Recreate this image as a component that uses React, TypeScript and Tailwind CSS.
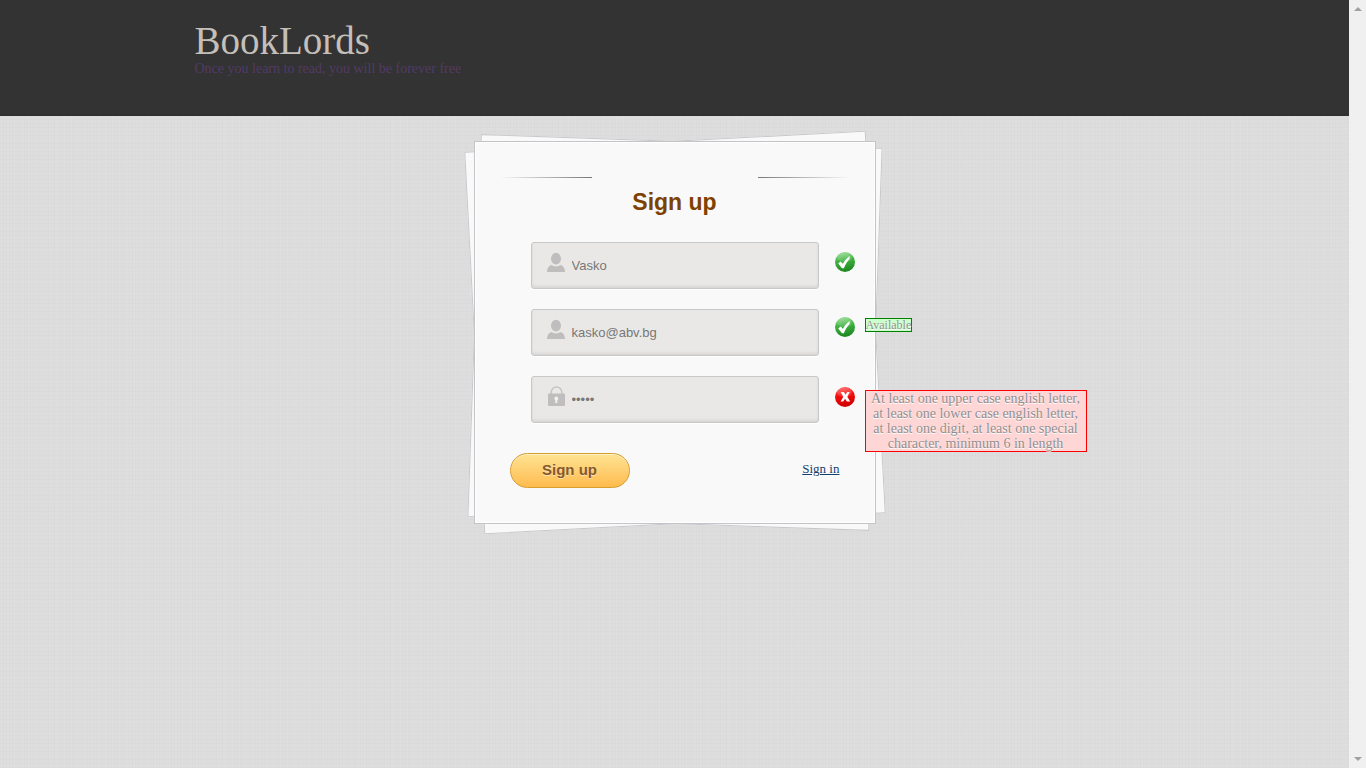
import { useId } from "react";
import type { ReactNode } from "react";

function UserIcon({ title }: { title: string }) {
  return (
    <svg viewBox="0 0 18 20" className="h-5 w-[18px]" fill="#bfbdbd" role="img" aria-label={title}>
      <ellipse cx="9" cy="6.600" rx="5" ry="5.800" />
      <path d="M0 20c.2-3.600 1.400-6 4.300-7 2.600 1.900 6.800 1.900 9.400 0 2.900 1 4.100 3.400 4.300 7z" />
    </svg>
  );
}

function LockIcon({ title }: { title: string }) {
  return (
    <svg viewBox="0 0 18 20" className="h-5 w-[18px]" role="img" aria-label={title}>
      <path d="M4.200 8V6.500a5.300 5.600 0 0 1 10.600 0V8" fill="none" stroke="#c6c4c4" strokeWidth="1.500" />
      <rect x="1" y="7.500" width="17" height="12.500" rx="1" fill="#bfbdbd" />
      <path d="M9.300 10.500a2 2 0 0 1 1 3.700V17H8.300v-2.800a2 2 0 0 1 1-3.700z" fill="#f3f2f1" />
    </svg>
  );
}

function StatusIcon({ ok }: { ok: boolean }) {
  const id = useId();
  return (
    <svg viewBox="0 0 20 20" className="h-5 w-5 shrink-0" role="img" aria-label={ok ? "Valid" : "Invalid"}>
      <defs>
        <linearGradient id={id} x1="0" y1="0" x2="0.200" y2="1">
          <stop offset="0" stopColor={ok ? "#a4e3a0" : "#ff6a6a"} />
          <stop offset="0.450" stopColor={ok ? "#43b544" : "#f50d0d"} />
          <stop offset="1" stopColor={ok ? "#1f8a22" : "#d00000"} />
        </linearGradient>
      </defs>
      <circle cx="10" cy="10" r="10" fill={`url(#${id})`} />
      <ellipse cx="9.500" cy="5.500" rx="7.500" ry="4.500" fill="#fff" opacity="0.150" />
      {ok ? (
        <path d="M3.200 11.400 5.600 9.400l2.300 2.400C9.600 8.800 11.700 6 14.600 4v3C12.200 9.600 10.200 12.800 8.900 16.200H7z" fill="#fff" />
      ) : (
        <path d="M5.600 5h3.300l1.600 2.700L12.300 5h2.500l-2.500 4.700 2.900 4.800h-3.400l-1.700-2.700-1.900 2.700H5.600l2.700-4.700z" fill="#fff" />
      )}
    </svg>
  );
}

interface FieldProps {
  id: string;
  type: string;
  value: string;
  icon: ReactNode;
  children: ReactNode;
}

function Field({ id, type, value, icon, children }: FieldProps) {
  return (
    <div className="relative">
      <label htmlFor={id} className="absolute top-2.5 left-4">
        {icon}
      </label>
      <input
        id={id}
        type={type}
        defaultValue={value}
        className="block h-[47px] w-full rounded-[3px] border border-[#c8c8c8] bg-[#eae8e6] pr-4 pl-10 font-['Liberation_Sans',Arial,sans-serif] text-[13px] text-[#777] shadow-[0_1px_0_#fff,inset_0_-2px_3px_rgba(0,0,0,0.08)] outline-none"
      />
      {children}
    </div>
  );
}

function ScrollRail() {
  return (
    <div className="flex w-[17px] shrink-0 flex-col items-center justify-between bg-[#f0f0f0] py-[7px]" aria-hidden="true">
      <svg viewBox="0 0 8 4" className="h-1 w-2" fill="#a0a0a0"><path d="M0 4 4 0l4 4z" /></svg>
      <svg viewBox="0 0 8 4" className="h-1 w-2" fill="#a0a0a0"><path d="m0 0 4 4 4-4z" /></svg>
    </div>
  );
}

export default function App() {
  return (
    <div className="flex min-h-screen font-['Liberation_Serif',Georgia,serif]">
      <div className="min-w-0 flex-1 bg-[#dddddd] bg-[repeating-linear-gradient(90deg,rgba(0,0,0,0.006)_0_1px,transparent_1px_3px),repeating-linear-gradient(0deg,rgba(0,0,0,0.006)_0_1px,transparent_1px_4px),repeating-linear-gradient(90deg,rgba(255,255,255,0.04)_0_2px,transparent_2px_7px),repeating-linear-gradient(0deg,rgba(255,255,255,0.04)_0_2px,transparent_2px_11px)]">
        <header className="h-29 border-b-2 border-[#303030] bg-[#333]">
          <div className="mx-auto max-w-[960px] pt-[21px]">
            <h1 className="text-[39px] leading-10 text-[#c4bfb9]">BookLords</h1>
            <a href="#home" className="block w-fit text-[14px] leading-4 text-[#523a66]">
              Once you learn to read, you will be forever free
            </a>
          </div>
        </header>
        <main className="px-4 pt-[25px]">
          <section className="relative isolate mx-auto w-full max-w-[402px]">
            <div className="absolute inset-0 -z-10 rotate-2 border border-[#c8c8cc] bg-[#f9f9f9]" />
            <div className="absolute inset-0 -z-10 -rotate-3 border border-[#c8c8cc] bg-[#f9f9f9]" />
            <form
              className="border border-[#c4c4c8] bg-[#f9f9f9] py-[35px] shadow-[inset_0_0_0_1px_#fff]"
              onSubmit={(event) => event.preventDefault()}
            >
              <div className="flex justify-between px-[25px]" aria-hidden="true">
                <span className="h-px w-[92px] bg-linear-to-l from-[#777] to-transparent" />
                <span className="h-px w-[92px] bg-linear-to-r from-[#777] to-transparent" />
              </div>
              <h2 className="mt-2.5 text-center font-['Liberation_Sans',Arial,sans-serif] text-[23px] leading-7 font-bold text-[#7e4100]">
                Sign up
              </h2>
              <div className="mx-14 mt-[26px] flex flex-col gap-5">
                <Field id="username" type="text" value="Vasko" icon={<UserIcon title="Username" />}>
                  <div className="absolute top-2.5 left-full ml-4">
                    <StatusIcon ok />
                  </div>
                </Field>
                <Field id="email" type="email" value="kasko@abv.bg" icon={<UserIcon title="E-mail" />}>
                  <div className="absolute top-2 left-full ml-4 flex items-start gap-2.5">
                    <StatusIcon ok />
                    <span className="mt-px border border-[#008000] bg-[#ccffcc] text-[12px] leading-3 text-[#8f8f8f] [text-shadow:0_1px_0_#fff]">
                      Available
                    </span>
                  </div>
                </Field>
                <Field id="password" type="password" value="vasko" icon={<LockIcon title="Password" />}>
                  <div className="absolute top-[11px] left-full ml-4 flex items-start gap-2.5">
                    <StatusIcon ok={false} />
                    <p className="mt-[3px] w-[222px] border border-[#ff0000] bg-[#ffd6d6] px-1 text-center text-[14px] leading-[15px] text-[#8f8f8f] [text-shadow:0_1px_0_#fff]">
                      At least one upper case english letter, at least one lower case english letter, at least one digit, at least one special character, minimum 6 in length
                    </p>
                  </div>
                </Field>
              </div>
              <div className="mx-[35px] mt-[30px] flex items-start justify-between">
                <button
                  type="submit"
                  className="h-[35px] w-[120px] rounded-full border border-[#d69e31] bg-linear-to-b from-[#fee391] to-[#febb4d] font-['Liberation_Sans',Arial,sans-serif] text-[15px] font-bold text-[#85592e] shadow-[inset_0_1px_0_rgba(255,255,255,0.5)] [text-shadow:0_1px_0_rgba(255,255,255,0.5)]"
                >
                  Sign up
                </button>
                <a href="#signin" className="mt-2 text-[13px] leading-4 text-[#123f6b] underline [text-shadow:0_1px_0_#fff]">
                  Sign in
                </a>
              </div>
            </form>
          </section>
        </main>
      </div>
      <ScrollRail />
    </div>
  );
}
